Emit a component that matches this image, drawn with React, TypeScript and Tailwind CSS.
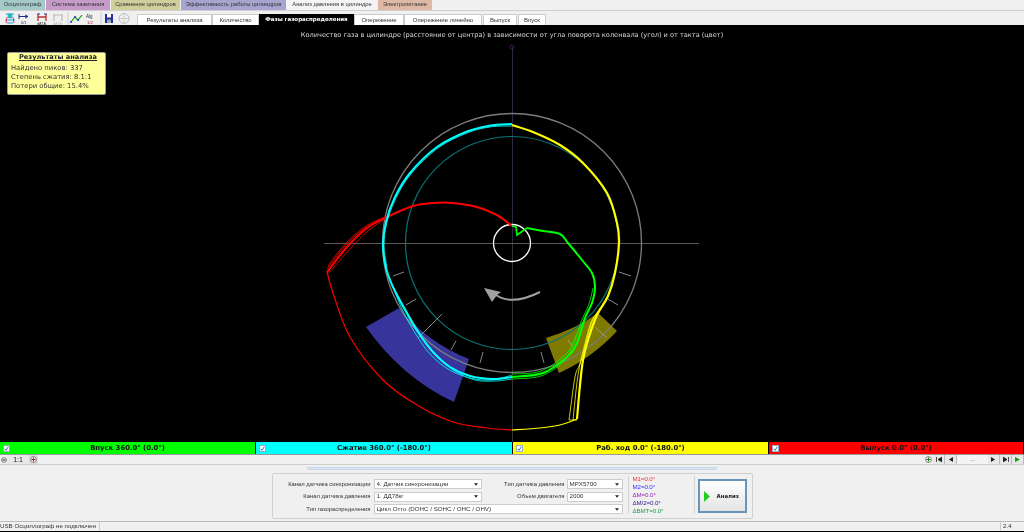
import React from "react";

const vf = "font-['DejaVu_Sans',Verdana,sans-serif]";

const topTabs = [
  { t: "Осциллограф", w: "w-[46px]", c: "bg-[#a3c9c9]" },
  { t: "Система зажигания", w: "w-[65px]", c: "bg-[#c79bc9]" },
  { t: "Сравнение цилиндров", w: "w-[70px]", c: "bg-[#cfcf9b]" },
  { t: "Эффективность работы цилиндров", w: "w-[106px]", c: "bg-[#a7a4cf]" },
  { t: "Анализ давления в цилиндре", w: "w-[91px]", c: "bg-[#f4f4f4]" },
  { t: "Электропитание", w: "w-[55px]", c: "bg-[#deb8a4]" },
];

const subTabs = [
  { t: "Результаты анализа", w: "w-[75px]" },
  { t: "Количество", w: "w-[47px]" },
  { t: "Фазы газораспределения", w: "w-[95px]", a: true },
  { t: "Опережение", w: "w-[50px]" },
  { t: "Опережение линейно", w: "w-[78px]", m: true },
  { t: "Выпуск", w: "w-[34px]", m: true },
  { t: "Впуск", w: "w-[28px]", m: true },
];

// smooth path through points (Catmull-Rom to Bezier)
const smooth = (s: string, dx = 0, dy = 0) => {
  const p = s
    .trim()
    .split(/\s+/)
    .map((q) => q.split(",").map(Number))
    .map(([x, y]) => [x + dx, y + dy]);
  let d = `M${p[0][0]} ${p[0][1]}`;
  for (let i = 0; i < p.length - 1; i++) {
    const a = p[Math.max(0, i - 1)];
    const b = p[i];
    const c = p[i + 1];
    const e = p[Math.min(p.length - 1, i + 2)];
    const c1x = b[0] + (c[0] - a[0]) / 6;
    const c1y = b[1] + (c[1] - a[1]) / 6;
    const c2x = c[0] - (e[0] - b[0]) / 6;
    const c2y = c[1] - (e[1] - b[1]) / 6;
    d += ` C${c1x} ${c1y} ${c2x} ${c2y} ${c[0]} ${c[1]}`;
  }
  return d;
};

const cyan =
  "512,124 490,125.6 467,131.5 437,147 410,173 395,197 386,222 383,245 386,268 393,287 404,308 418,332 433,352 450,367 470,376 493,379 512,377";
const cyanTop =
  "512,126 490,127 467,133 438,148 411,174 396,198 387,222 384,245 387,268";
const cyanB =
  "393,287 406,310 421,335 437,356 455,371 475,380 495,381 512,379";
const cyanC =
  "393,287 402,309 415,333 430,354 448,369 470,378 492,380 512,375";
const green =
  "512,377 543,373 567,357 577,343 585,318 592,303 595,287 592,273 582,260 568,243 560,234 543,231 527,228";
const greenB =
  "512,379 541,376 563,362 573,346 581,322 589,304 593,288";
const greenC =
  "512,374 541,371 566,354 575,338 586,316 593,300";
const red =
  "512,226 497,215 477,207 453,203 433,203 413,206 387,217 367,228 347,247 327,272";
const redOut =
  "327,272 333,293 350,337 383,380 417,405 453,422 487,428 512,430";
const yellow =
  "577,419 580,385 583,360 588,340 597,315 608,296 615,273 619,243 617,223 607,193 583,163 560,145 533,132 512,125";
const yellowB = "569,420 575,377 580,363 590,325 597,313";
const yellowC = "573,420 578,375 584,350 592,322 600,308";
const yellowBase = "512,430 540,428 560,425 577,419";

const ticks = [
  [619, 272, 631, 276],
  [608, 299, 618, 305],
  [595, 327, 607, 338],
  [568, 340, 572, 346],
  [541, 352, 544, 363],
  [393, 276, 404, 272],
  [406, 305, 416, 299],
  [418, 338, 442, 314],
  [451, 350, 456, 341],
  [480, 363, 483, 352],
];

function Chart() {
  return (
    <svg viewBox="0 25 1024 417" className="block w-[1024px] h-[417px]">
      <path d="M366 327 L399 308 Q428 343 469 359 L454 402 Q402 378 366 327Z" fill="#37359b" />
      <path d="M546 338 Q576 329 598 313 L617 331 Q592 358 559 373Z" fill="#7f7a00" />
      <line x1="512.5" y1="47" x2="512.5" y2="243" stroke="#2a2a44" />
      <line x1="512.5" y1="243" x2="512.5" y2="442" stroke="#333" />
      <line x1="324" y1="243.5" x2="699" y2="243.5" stroke="#5a5a5a" />
      <circle cx="512" cy="47" r="2" fill="none" stroke="#50105a" />
      <circle cx="512" cy="243" r="129.5" fill="none" stroke="#7c7c7c" strokeWidth="1.3" />
      <circle cx="512" cy="243" r="106.5" fill="none" stroke="#0a7272" strokeWidth="1.2" />
      <circle cx="512" cy="243" r="18.5" fill="none" stroke="#fff" strokeWidth="1.3" />
      {ticks.map(([a, b, c, d], i) => (
        <line key={i} x1={a} y1={b} x2={c} y2={d} stroke="#aaa" strokeWidth="0.8" />
      ))}
      <path d="M540 292 Q512 306 496 295" fill="none" stroke="#a0a0a0" strokeWidth="2" />
      <polygon points="484,288 501,292 497,295 492,302" fill="#a0a0a0" />

      <path d={smooth(red)} fill="none" stroke="#f00" strokeWidth="2" />
      <path d={smooth("387,216 366,226 345,244 328,266")} fill="none" stroke="#f00" strokeWidth="0.8" />
      <path d={smooth("387,217 365,228 345,246 327,269")} fill="none" stroke="#f00" strokeWidth="0.8" />
      <path d={smooth("387,218 368,231 349,250 328,274")} fill="none" stroke="#f00" strokeWidth="0.8" />
      <path d={smooth(redOut)} fill="none" stroke="#f00" strokeWidth="1.2" />
      <path d={smooth(yellowBase)} fill="none" stroke="#ff0" strokeWidth="1.2" />

      <path d={smooth(yellow)} fill="none" stroke="#ff0" strokeWidth="2.2" />
      <path d={smooth(yellowB)} fill="none" stroke="#ff0" strokeWidth="0.8" />
      <path d={smooth(yellowC)} fill="none" stroke="#ff0" strokeWidth="0.8" />
      <path d="M569 420 H577" fill="none" stroke="#ff0" strokeWidth="0.8" />

      <path d={smooth(green)} fill="none" stroke="#0f0" strokeWidth="2" />
      <path d={smooth(greenB)} fill="none" stroke="#0f0" strokeWidth="0.8" />
      <path d={smooth(greenC)} fill="none" stroke="#0f0" strokeWidth="0.8" />
      <polyline points="527,228 517,235 516,227 512,226" fill="none" stroke="#0f0" strokeWidth="1.6" />

      <path d={smooth(cyan)} fill="none" stroke="#0ff" strokeWidth="2" />
      <path d={smooth(cyanTop)} fill="none" stroke="#0ff" strokeWidth="0.8" />
      <path d={smooth(cyanB)} fill="none" stroke="#0ff" strokeWidth="0.8" />
      <path d={smooth(cyanC)} fill="none" stroke="#0ff" strokeWidth="0.8" />
    </svg>
  );
}

function Check() {
  return (
    <span className="flex items-center justify-center w-[7px] h-[7px] bg-white border border-[#9ab] shrink-0">
      <svg viewBox="0 0 7 7" className="w-[5px] h-[5px]">
        <path d="M1 4 L3 6 L6 1" fill="none" stroke="#2a6fc0" strokeWidth="1.4" />
      </svg>
    </span>
  );
}

function Bar({ label, bg, w }: { label: string; bg: string; w: string }) {
  return (
    <div className={`${bg} ${w} h-full flex items-center pl-[3px] border-r border-black`}>
      <Check />
      <span className={`flex-1 mr-[10px] text-center text-[6.85px] font-bold text-[#111] ${vf}`}>{label}</span>
    </div>
  );
}

function Sel({ t, w }: { t: string; w: string }) {
  return (
    <div className={`${w} h-[10px] bg-white border border-[#ccc] flex items-center justify-between pl-[2px] pr-[3px] text-[6.2px] text-[#333] leading-none`}>
      <span className="truncate">{t}</span>
      <svg viewBox="0 0 5 3" className="w-[4px] h-[3px] shrink-0">
        <polygon points="0,0 5,0 2.5,3" fill="#222" />
      </svg>
    </div>
  );
}

function NavBtn({ children, w = "w-[12px]" }: { children?: React.ReactNode; w?: string }) {
  return (
    <div className={`${w} h-[9px] bg-[#e8e8e8] border-r border-[#bbb] flex items-center justify-center`}>
      {children}
    </div>
  );
}

function ToolIcons() {
  return (
    <div className="flex items-center h-[14px] w-[137px] shrink-0">
      <svg viewBox="0 0 133 13" className="w-[133px] h-[13px]">
        <g fill="none" strokeWidth="1">
          <circle cx="10" cy="4" r="2.5" fill="#20c0c0" />
          <path d="M6 2 L14 2 M5 8 L15 8 M7 11 L13 11" stroke="#20a0d0" />
          <path d="M7 5 L6 11 M13 5 L14 11" stroke="#e04080" />
          <path d="M19 2 V7 M19 4.5 H28 M25 3 L28 4.5 L25 6" stroke="#203090" />
          <text x="21" y="12" fontSize="4" fill="#333" stroke="none">0/1</text>
          <path d="M38 2 V9 M46 2 V9 M38 5 H46" stroke="#c03030" strokeWidth="1.3" />
          <path d="M37 2 H40 M44 2 H47" stroke="#2040a0" />
          <text x="37" y="12.5" fontSize="3.8" fill="#333" stroke="none">dATA</text>
          <path d="M54 2 V9 M62 2 V9 M54 3 H62" stroke="#bbb" strokeWidth="1.2" />
          <text x="53" y="12.5" fontSize="3.8" fill="#bbb" stroke="none">dATA</text>
          <path d="M68 0 V13" stroke="#ccc" />
          <path d="M71 10 L75 5 L78 8 L82 3" stroke="#10a010" strokeWidth="1.2" />
          <circle cx="71" cy="10" r="1" fill="#2040c0" stroke="none" />
          <circle cx="75" cy="5" r="1" fill="#2040c0" stroke="none" />
          <circle cx="78" cy="8" r="1" fill="#2040c0" stroke="none" />
          <text x="86" y="5.5" fontSize="4.5" fill="#223" stroke="none">Alg</text>
          <text x="87" y="12" fontSize="4.2" fill="#b02020" stroke="none">1/2</text>
          <path d="M101 0 V13" stroke="#ccc" />
          <rect x="105" y="2" width="8" height="9" fill="#20309a" stroke="none" />
          <rect x="107" y="2" width="4" height="3.5" fill="#fff" stroke="none" />
          <rect x="107" y="7.5" width="4" height="3.5" fill="#9ab" stroke="none" />
          <circle cx="124" cy="6.5" r="5" stroke="#bbb" />
          <path d="M119 6.5 H129 M124 2 V11" stroke="#ccc" />
        </g>
      </svg>
    </div>
  );
}

export default function App() {
  return (
    <div className="w-[1024px] h-[532px] flex flex-col overflow-hidden bg-[#f0f0f0] blur-[0.3px] font-['Liberation_Sans',Arial,sans-serif] text-[#333]">
      {/* top tabs */}
      <div className="flex h-[10px] shrink-0 pr-0">
        {topTabs.map((t) => (
          <div key={t.t} className={`${t.w} ${t.c} h-full border-r border-[#f0f0f0] flex items-center justify-center text-[5.8px] whitespace-nowrap leading-none text-[#333]`}>
            {t.t}
          </div>
        ))}
      </div>
      <div className="h-[1px] bg-[#d0d0d0] shrink-0" />
      {/* toolbar + subtabs */}
      <div className="flex h-[14px] shrink-0 bg-[#f0f0f0] items-end">
        <ToolIcons />
        <div className="flex items-end h-[11px]">
          {subTabs.map((t) => (
            <div
              key={t.t}
              className={`${t.w} ${t.m ? "mr-[1px]" : ""} h-full flex items-center justify-center whitespace-nowrap leading-none ${
                t.a ? `bg-black text-white font-bold text-[5.5px] ${vf}` : "bg-white border border-b-0 border-[#ccc] text-[#333] text-[6px]"
              }`}
            >
              {t.t}
            </div>
          ))}
        </div>
      </div>
      {/* chart */}
      <div className="relative h-[417px] shrink-0 bg-black">
        <Chart />
        <div className={`absolute left-[300px] w-[424px] top-[7px] text-center whitespace-nowrap text-[6.6px] leading-none text-[#d8d8d8] ${vf}`}>
          Количество газа в цилиндре (расстояние от центра) в зависимости от угла поворота коленвала (угол) и от такта (цвет)
        </div>
        <div className={`absolute left-[7px] top-[27px] w-[99px] h-[43px] bg-[#ffff99] border border-[#999] rounded-[2px] text-[6.8px] leading-[9px] text-[#333] pl-[3px] ${vf}`}>
          <div className="text-center font-bold underline text-[#222] mb-[2px] text-[6.6px]">Результаты анализа</div>
          <div>Найдено пиков: 337</div>
          <div>Степень сжатия: 8.1:1</div>
          <div>Потери общие: 15.4%</div>
        </div>
      </div>
      {/* colored bars */}
      <div className="flex h-[13px] shrink-0 border-b border-[#999]">
        <Bar label="Впуск 360.0° (0.0°)" bg="bg-[#00ff00]" w="w-[256px]" />
        <Bar label="Сжатие 360.0° (-180.0°)" bg="bg-[#00ffff]" w="w-[257px]" />
        <Bar label="Раб. ход 0.0° (-180.0°)" bg="bg-[#ffff00]" w="w-[256px]" />
        <Bar label="Выпуск 0.0° (0.0°)" bg="bg-[#ff0000]" w="w-[255px]" />
      </div>
      {/* scale / nav */}
      <div className="flex h-[9px] shrink-0 items-center border-b border-[#ccc] box-content">
        <div className="w-[7px] h-[8px] flex items-center justify-center">
          <svg viewBox="0 0 7 7" className="w-[6px] h-[6px]">
            <circle cx="3.5" cy="3.5" r="3" fill="#ddd" stroke="#666" strokeWidth="0.7" />
            <path d="M1.5 3.5 H5.5" stroke="#222" strokeWidth="1" />
          </svg>
        </div>
        <div className="w-[22px] h-[9px] bg-[#e8e8e8] text-center text-[7px] leading-[9px] text-[#222]">1:1</div>
        <div className="w-[9px] h-[9px] bg-[#ddd] flex items-center justify-center">
          <svg viewBox="0 0 7 7" className="w-[7px] h-[7px]">
            <circle cx="3.5" cy="3.5" r="3" fill="#eee" stroke="#666" strokeWidth="0.7" />
            <path d="M1.5 3.5 H5.5 M3.5 1.5 V5.5" stroke="#b02020" strokeWidth="1" />
          </svg>
        </div>
        <div className="flex-1" />
        <svg viewBox="0 0 7 7" className="w-[7px] h-[7px] mr-[1px]">
          <circle cx="3.5" cy="3.5" r="3" fill="#eee" stroke="#666" strokeWidth="0.7" />
          <path d="M1.5 3.5 H5.5 M3.5 1.5 V5.5" stroke="#108010" strokeWidth="1" />
        </svg>
        <NavBtn>
          <svg viewBox="0 0 6 5" className="w-[6px] h-[5px]"><path d="M0.5 0 V5 M6 0 L2 2.5 L6 5Z" stroke="#222" strokeWidth="0.8" fill="#222" /></svg>
        </NavBtn>
        <NavBtn>
          <svg viewBox="0 0 5 5" className="w-[5px] h-[5px]"><path d="M5 0 L1 2.5 L5 5Z" fill="#222" /></svg>
        </NavBtn>
        <div className="w-[31px] h-[9px] bg-[#f4f4f4] text-center text-[6px] leading-[9px]">...</div>
        <NavBtn>
          <svg viewBox="0 0 5 5" className="w-[5px] h-[5px]"><path d="M0 0 L4 2.5 L0 5Z" fill="#222" /></svg>
        </NavBtn>
        <NavBtn>
          <svg viewBox="0 0 6 5" className="w-[6px] h-[5px]"><path d="M5.5 0 V5 M0 0 L4 2.5 L0 5Z" stroke="#222" strokeWidth="0.8" fill="#222" /></svg>
        </NavBtn>
        <NavBtn>
          <svg viewBox="0 0 5 5" className="w-[5px] h-[5px]"><path d="M0 0 L5 2.5 L0 5Z" fill="#10a010" /></svg>
        </NavBtn>
      </div>
      {/* bottom panel */}
      <div className="flex-1 flex flex-col items-center relative">
        <div className="w-[410px] h-[3px] mt-[2px] bg-[#dce8f4] border border-[#c4d4e8] rounded-[1px]" />
        <div className="w-[481px] h-[46px] mt-[3px] bg-[#f0f0f0] border border-[#d0d0d0] rounded-[2px] flex text-[5.85px] text-[#333]">
          <div className="flex flex-col pt-[5px] gap-[2.5px] w-[351px] shrink-0">
            <div className="flex items-center h-[10px]">
              <span className="w-[98px] text-right whitespace-nowrap">Канал датчика синхронизации</span>
              <div className="w-[3px]" />
              <Sel t="4.  Датчик синхронизации" w="w-[108px]" />
              <span className="w-[83px] text-right whitespace-nowrap">Тип датчика давления</span>
              <div className="w-[2px]" />
              <Sel t="MPX5700" w="w-[56px]" />
            </div>
            <div className="flex items-center h-[10px]">
              <span className="w-[98px] text-right whitespace-nowrap">Канал датчика давления</span>
              <div className="w-[3px]" />
              <Sel t="1.  ДД78кг" w="w-[108px]" />
              <span className="w-[83px] text-right whitespace-nowrap">Объем двигателя</span>
              <div className="w-[2px]" />
              <Sel t="2000" w="w-[56px]" />
            </div>
            <div className="flex items-center h-[10px]">
              <span className="w-[98px] text-right whitespace-nowrap">Тип газораспределения</span>
              <div className="w-[3px]" />
              <Sel t="Цикл Отто (DOHC / SOHC / OHC / OHV)" w="w-[249px]" />
            </div>
          </div>
          <div className="w-[1px] h-[38px] mt-[2px] ml-[4px] bg-[#d4d4d4]" />
          <div className="flex flex-col pl-[4px] pt-[1px] w-[65px] text-[6.2px] leading-[8px] tracking-[-0.1px]">
            <span className="text-[#ff3030]">М1=0.0°</span>
            <span className="text-[#3030ff]">М2=0.0°</span>
            <span className="text-[#a020c0]">ΔМ=0.0°</span>
            <span className="text-[#30209a]">ΔМ/2=0.0°</span>
            <span className="text-[#20a040]">ΔВМТ=0.0°</span>
          </div>
          <div className="w-[1px] h-[38px] mt-[2px] bg-[#d4d4d4]" />
          <div className="ml-[3px] mt-[5px] w-[49px] h-[34px] border-2 border-[#6b93b8] bg-gradient-to-b from-white to-[#e4e4e4] flex items-center pl-[4px]">
            <svg viewBox="0 0 6 11" className="w-[6px] h-[11px]">
              <polygon points="0,0 6,5.5 0,11" fill="#22cc22" />
            </svg>
            <span className={`ml-[7px] text-[5.4px] font-bold text-[#222] ${vf}`}>Анализ</span>
          </div>
        </div>
      </div>
      {/* status */}
      <div className="h-[11px] shrink-0 border-t border-b border-t-[#bbb] border-b-black flex items-center text-[6.2px] text-[#333] leading-none">
        <div className="w-[100px] h-full border-r border-[#ccc] flex items-center whitespace-nowrap">USB Осциллограф не подключен</div>
        <div className="flex-1 h-full" />
        <div className="w-[24px] h-full border-l border-[#ccc] flex items-center pl-[2px]">2.4</div>
      </div>
    </div>
  );
}
